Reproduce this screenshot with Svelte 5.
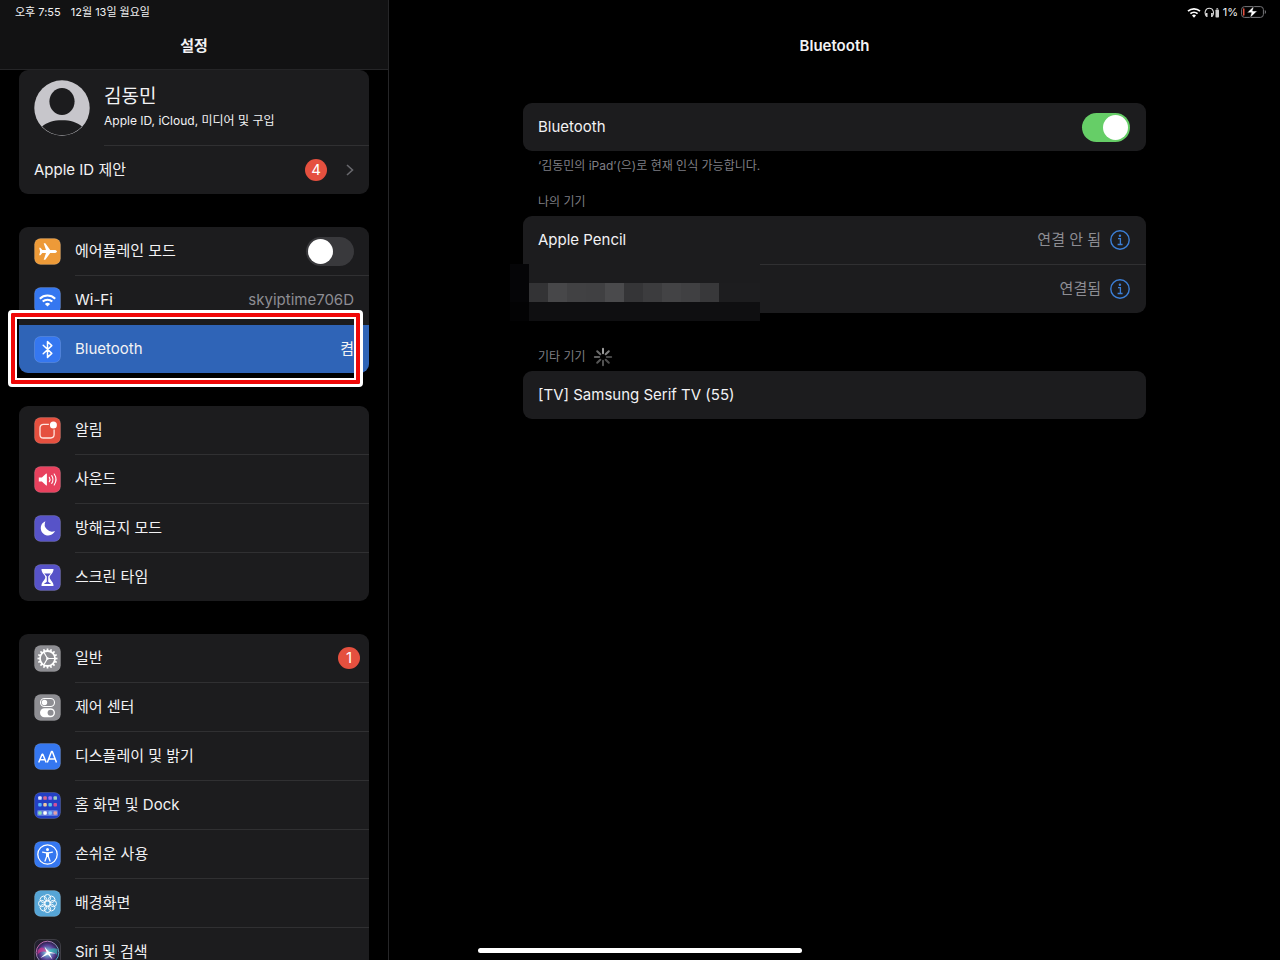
<script>
  let airplane = $state(false);
  let bluetooth = $state(true);

  const alerts = [
    { id: 'notifications', label: '알림', color: '#e5503f' },
    { id: 'sounds', label: '사운드', color: '#e8415e' },
    { id: 'dnd', label: '방해금지 모드', color: '#5753c8' },
    { id: 'screentime', label: '스크린 타임', color: '#5753c8' }
  ];
  const general = [
    { id: 'general', label: '일반', color: '#8e8e93', badge: 1 },
    { id: 'control', label: '제어 센터', color: '#8e8e93' },
    { id: 'display', label: '디스플레이 및 밝기', color: '#3577f0' },
    { id: 'home', label: '홈 화면 및 Dock', color: '#2340c4' },
    { id: 'accessibility', label: '손쉬운 사용', color: '#3577f0' },
    { id: 'wallpaper', label: '배경화면', color: '#56a5d6' },
    { id: 'siri', label: 'Siri 및 검색', color: '#22202f' }
  ];

  const teeth = Array.from({ length: 16 }, (_, i) => i * 22.5);
  const petals = Array.from({ length: 8 }, (_, i) => i * 45);
  const spokes = [0.62, 0.5, 0.28, 0.3, 0.32, 0.34, 0.38, 0.42];
  const apps = [
    ['#dfe6ff', '#d9698e', '#a070ff', '#9fd0c0'],
    ['#57b4ff', '#f0c9a0', '#58c6e8', '#d0509a'],
    ['#8fe0b0', '#ffffff', '#7cc4ff', '#e0a0a8']
  ];
  const mosaic = ['#333335', '#474749', '#414143', '#404042', '#4a4a4c', '#353537', '#3c3c3e', '#434345', '#404042', '#38383a', '#1d1d1f'];
</script>

{#snippet icon(id, color)}
  <svg class="icon" viewBox="0 0 27 27" aria-hidden="true">
    <rect x="0.5" y="0.5" width="26" height="26" rx="6" fill={color} stroke="#fff" stroke-opacity="0.14" />
    {#if id === 'airplane'}
      <path fill="#fff" d="M23 13.500c0-.9-1.300-1.500-2.700-1.500h-4.100L11.300 5.200H9.700l2.300 6.800H8.300L6.400 9.800H5.200l.9 3.700-.9 3.700h1.200l1.900-2.200H12l-2.300 6.800h1.600l4.900-6.800h4.100c1.400 0 2.700-.6 2.700-1.500z" />
    {:else if id === 'wifi'}
      <g fill="none" stroke="#fff" stroke-width="2">
        <path d="M5.800 11.700a11 11 0 0 1 15.400 0" />
        <path d="M8.700 14.600a7 7 0 0 1 9.600 0" />
      </g>
      <path fill="#fff" d="M10.900 16.900a3.800 3.800 0 0 1 5.200 0l-2.600 2.700z" />
    {:else if id === 'bluetooth'}
      <path fill="none" stroke="#fff" stroke-width="1.500" stroke-linejoin="round" stroke-linecap="round" d="M9.200 9.300l8.600 8.100-4.300 4V5.600l4.300 4-8.600 8.100" />
    {:else if id === 'notifications'}
      <path fill="none" stroke="#ffe6e0" stroke-width="1.300" d="M14.900 7.300H9.400A3.400 3.400 0 0 0 6 10.700v7A3.400 3.400 0 0 0 9.400 21h7.300a3.400 3.400 0 0 0 3.400-3.400V12.600" />
      <circle cx="19.400" cy="8" r="3.500" fill="#fff" />
    {:else if id === 'sounds'}
      <path fill="#fff" d="M4.800 11.400h3.100l4-3.700c.5-.4 1-.2 1 .4v10.800c0 .6-.5.800-1 .4l-4-3.700H4.800z" />
      <g fill="none" stroke="#fff" stroke-width="1.100" stroke-linecap="round">
        <path d="M15.300 11.300a4 4 0 0 1 0 4.400" /><path d="M17.700 9.600a7 7 0 0 1 0 7.800" /><path d="M20.200 8a10 10 0 0 1 0 11" />
      </g>
    {:else if id === 'dnd'}
      <path fill="#fff" d="M11.400 6.200a7.400 7.400 0 1 0 9.600 9.700 7.300 7.300 0 0 1-9.600-9.700z" />
    {:else if id === 'screentime'}
      <path fill="#fff" d="M8.200 5h10.600c.6 0 .9.500.7 1.100-.7 3.900-3.800 5-3.800 7.400s3.100 3.500 3.800 7.400c.2.600-.1 1.100-.7 1.100H8.200c-.6 0-.9-.5-.7-1.100.7-3.900 3.800-5 3.800-7.400S8.200 10 7.500 6.100c-.2-.6.1-1.100.7-1.100z" />
      <path fill={color} d="M10.200 9.500h6.600l-2.600 3v5.200l3 2.300H9.800l3-2.300v-5.200z" />
    {:else if id === 'general'}
      <g stroke="#fff">
        {#each teeth as a}
          <path d="M13.500 3.500v2.800" stroke-width="1.700" transform="rotate({a} 13.500 13.500)" />
        {/each}
        <circle cx="13.500" cy="13.500" r="7.500" fill="none" stroke-width="1.800" />
        <path d="M13.500 13.500h7M13.500 13.500L10 7.500M13.500 13.500L10 19.500" stroke-width="1.200" />
      </g>
      <circle cx="13.500" cy="13.500" r="1.300" fill="#fff" />
    {:else if id === 'control'}
      <rect x="6.500" y="4.500" width="14" height="8" rx="4" fill="none" stroke="#fff" stroke-width="1.100" />
      <circle cx="10.500" cy="8.500" r="2.700" fill="#fff" />
      <rect x="6" y="14.300" width="15" height="9" rx="4.500" fill="#fff" />
      <circle cx="16.600" cy="18.800" r="3" fill={color} />
    {:else if id === 'display'}
      <g fill="none" stroke="#fff" stroke-width="1.500" stroke-linejoin="round">
        <path d="M4.700 19.500l3.400-8.300h.7l3.400 8.300M5.900 16.800H11" />
        <path d="M13.300 19.500l4.200-11h.8l4.200 11M14.700 15.900h6.400" />
      </g>
    {:else if id === 'home'}
      <rect x="3" y="18" width="21" height="6" rx="1.500" fill="#8ea4f0" opacity="0.55" />
      {#each apps as row, r}
        {#each row as fill, c}
          <rect x={4.2 + c * 5.1} y={r === 2 ? 19.2 : 4.3 + r * 6.7} width="3.500" height="3.500" rx="0.900" {fill} />
        {/each}
      {/each}
    {:else if id === 'accessibility'}
      <circle cx="13.500" cy="13.500" r="9.700" fill="none" stroke="#fff" stroke-width="1.300" />
      <circle cx="13.500" cy="8.400" r="1.500" fill="#fff" />
      <path fill="none" stroke="#fff" stroke-width="1.300" stroke-linecap="round" stroke-linejoin="round" d="M8.600 11.200l3.700.7h2.400l3.700-.7M12.700 12v3.500l-1.700 4.600M14.300 12v3.500l1.700 4.600" />
      <path fill="#fff" d="M12.200 11.500h2.600v4.500h-2.600z" />
    {:else if id === 'wallpaper'}
      <g fill="none" stroke="#fff" stroke-width="0.900">
        {#each petals as a}
          <circle cx="13.500" cy="7.700" r="3.200" transform="rotate({a} 13.500 13.500)" />
        {/each}
        <circle cx="13.500" cy="13.500" r="2.600" />
      </g>
    {:else}
      <defs>
        <linearGradient id="siri-ring" x1="0" y1="0" x2="1" y2="1">
          <stop offset="0" stop-color="#d858a8" /><stop offset="0.500" stop-color="#8a90b8" /><stop offset="1" stop-color="#37c5d8" />
        </linearGradient>
        <radialGradient id="siri-core">
          <stop offset="0" stop-color="#d8f2f8" /><stop offset="0.300" stop-color="#6f9ac8" /><stop offset="0.650" stop-color="#5a3f96" /><stop offset="1" stop-color="#241d40" />
        </radialGradient>
      </defs>
      <circle cx="13.500" cy="13.500" r="11.300" fill="url(#siri-core)" stroke="url(#siri-ring)" stroke-width="1" />
      <path fill="#d9388e" opacity="0.700" d="M3.500 12C6 7 10 7 13.500 13.500 10 12 6 12 3.500 16z" />
      <path fill="#2fc3b8" opacity="0.650" d="M23.500 10C19 8 16 10 13.500 13.500c4-1 7-.5 9.500 2.500z" />
      <path fill="#fff" d="M10.500 7.500l4.200 5 7.300 2-6.500-.3 3 6.300-4.500-5-7.500 3.500 6.200-5.500z" />
    {/if}
  </svg>
{/snippet}

{#snippet navRow(item)}
  <li>
    <a class="row" href="#{item.id}">
      {@render icon(item.id, item.color)}
      <span class="body">
        <span>{item.label}</span>
        {#if item.badge}<span class="badge edge">{item.badge}</span>{/if}
      </span>
    </a>
  </li>
{/snippet}

{#snippet infoButton(name)}
  <button class="info" aria-label={name}>
    <svg viewBox="0 0 20 20" aria-hidden="true">
      <circle cx="10" cy="10" r="9.200" fill="none" stroke="#3c7fd6" stroke-width="1.400" />
      <circle cx="9.900" cy="5.700" r="1.200" fill="#3c7fd6" />
      <path d="M8 8.700h2.400v5.600M7.600 14.500h5" fill="none" stroke="#3c7fd6" stroke-width="1.300" />
    </svg>
  </button>
{/snippet}

<div class="screen">
  <aside>
    <header class="side-head">
      <div class="status"><span>오후 7:55</span><span>12월 13일 월요일</span></div>
      <h1>설정</h1>
    </header>

    <nav aria-label="설정">
      <ul class="card">
        <li>
          <a class="profile" href="#profile">
            <svg class="avatar" viewBox="0 0 57 57" aria-hidden="true">
              <circle cx="28.500" cy="28.500" r="28.200" fill="#c7c6cb" />
              <ellipse cx="28.500" cy="21.800" rx="12.800" ry="13.700" fill="#1c1c1e" />
              <path fill="#1c1c1e" d="M8.200 47.300C13 43 20 41 28.500 41s15.500 2 20.300 6.300a27.600 27.600 0 0 1-40.600 0z" />
            </svg>
            <span class="who">
              <strong>김동민</strong>
              <small>Apple ID, iCloud, 미디어 및 구입</small>
            </span>
          </a>
        </li>
        <li>
          <a class="row plain" href="#suggestions">
            <span class="body">
              <span>Apple ID 제안</span>
              <span class="trail">
                <span class="badge">4</span>
                <svg class="chevron" viewBox="0 0 8 12" aria-hidden="true"><path d="M1 1l5.500 5L1 11" fill="none" stroke="#68686d" stroke-width="1.600" /></svg>
              </span>
            </span>
          </a>
        </li>
      </ul>

      <ul class="card">
        <li>
          <label class="row">
            {@render icon('airplane', '#ed9a38')}
            <span class="body">
              <span>에어플레인 모드</span>
              <input type="checkbox" role="switch" class="switch" bind:checked={airplane} />
            </span>
          </label>
        </li>
        <li>
          <a class="row before-selected" href="#wifi">
            {@render icon('wifi', '#3577f0')}
            <span class="body"><span>Wi-Fi</span><span class="value">skyiptime706D</span></span>
          </a>
        </li>
        <li class="marked">
          <a class="row selected" href="#bluetooth" aria-current="page">
            {@render icon('bluetooth', '#3577f0')}
            <span class="body"><span>Bluetooth</span><span>켬</span></span>
          </a>
          <span class="marker"></span>
        </li>
      </ul>

      <ul class="card">
        {#each alerts as item}{@render navRow(item)}{/each}
      </ul>

      <ul class="card">
        {#each general as item}{@render navRow(item)}{/each}
      </ul>
    </nav>
  </aside>

  <main>
    <header class="main-head">
      <div class="status right">
        <svg width="14" height="11" viewBox="0 0 14 11" aria-hidden="true">
          <g fill="none" stroke="#fff" stroke-width="1.700"><path d="M1 4.200a8.700 8.700 0 0 1 12 0" /><path d="M3.400 6.700a5.300 5.300 0 0 1 7.200 0" /></g>
          <path fill="#fff" d="M5 8.500a2.900 2.900 0 0 1 4 0l-2 2.200z" />
        </svg>
        <svg width="16" height="11" viewBox="0 0 16 11" aria-hidden="true">
          <path fill="none" stroke="#ddd" stroke-width="1.100" d="M2.500 9.500C-.2 6 1.300 1.300 5.300 1.300S10.800 6 8.100 9.500" />
          <path fill="#ddd" d="M1.700 6h1.800v4H2.300zM8.900 6H7.100v4h1.200z" />
          <rect x="11.500" y="2.500" width="3.500" height="8" rx="0.800" fill="#ccc" /><rect x="12.400" y="1.200" width="1.700" height="1" fill="#ccc" />
        </svg>
        <span>1%</span>
        <svg width="26" height="12" viewBox="0 0 26 12" aria-hidden="true">
          <rect x="0.600" y="0.600" width="21.800" height="10.800" rx="3" fill="none" stroke="#77777a" stroke-width="1" />
          <path fill="#77777a" d="M23.800 4c1.600.5 1.600 3.500 0 4z" />
          <rect x="2" y="2.200" width="1.500" height="7.600" rx="0.700" fill="#e5503f" />
          <path fill="#fff" stroke="#000" stroke-width="0.500" d="M12.900 0L6 6.700h4.300L9 12l7.300-7h-4.600z" />
        </svg>
      </div>
      <h2>Bluetooth</h2>
    </header>

    <div class="content">
      <label class="card item">
        <span>Bluetooth</span>
        <input type="checkbox" role="switch" class="switch" bind:checked={bluetooth} />
      </label>
      <p class="note">‘김동민의 iPad’(으)로 현재 인식 가능합니다.</p>

      <h3>나의 기기</h3>
      <ul class="card">
        <li class="item line">
          <span>Apple Pencil</span>
          <span class="state">연결 안 됨 {@render infoButton('Apple Pencil')}</span>
        </li>
        <li class="item hidden-name">
          <span class="mosaic">
            <i class="edge-top"></i>
            <i class="above"></i>
            {#each mosaic as c}<i style:background={c}></i>{/each}
            <i class="edge-low"></i>
            <i class="below"></i>
          </span>
          <span class="state">연결됨 {@render infoButton('연결됨')}</span>
        </li>
      </ul>

      <h3 class="far">
        기타 기기
        <svg width="20" height="20" viewBox="0 0 20 20" aria-hidden="true">
          {#each spokes as o, i}
            <path d="M10 1.800v4.400" stroke="#fff" stroke-width="2" stroke-linecap="round" opacity={o} transform="rotate({i * 45} 10 10)" />
          {/each}
        </svg>
      </h3>
      <ul class="card">
        <li class="item"><span>[TV] Samsung Serif TV (55)</span></li>
      </ul>
    </div>
  </main>
  <div class="home-bar"></div>
</div>

<style>
  :global(body) { background: #000; }
  .screen {
    position: relative;
    display: flex;
    height: 100vh;
    overflow: hidden;
    background: #000;
    color: #f2f2f4;
    font: 400 15px/20px Inter, "Noto Sans CJK KR", sans-serif;
  }
  .screen * { box-sizing: border-box; }
  ul, h1, h2, h3, p { margin: 0; padding: 0; list-style: none; }
  a { color: inherit; text-decoration: none; }
  aside { flex: 0 0 389px; border-right: 1px solid #262628; }
  main { flex: 1; min-width: 0; }
  .side-head { height: 70px; background: #121213; border-bottom: 1px solid #252527; }
  .status {
    display: flex;
    align-items: center;
    gap: 10px;
    height: 24px;
    padding: 0 15px;
    font-size: 11px;
    line-height: 16px;
  }
  .status.right { justify-content: flex-end; gap: 3px; padding-right: 13px; }
  h1, h2 { padding: 12px 0; text-align: center; font-size: 15px; line-height: 20px; font-weight: 600; }
  nav { display: flex; flex-direction: column; gap: 33px; padding: 0 19px; }
  .card { background: #1c1c1e; border-radius: 9px; }
  .profile { display: flex; gap: 14px; padding-left: 15px; }
  .avatar { width: 56px; height: 56px; margin-top: 10px; }
  .who { flex: 1; display: flex; flex-direction: column; height: 76px; padding-top: 14px; border-bottom: 1px solid #303032; }
  .who strong { font-size: 19px; line-height: 26px; font-weight: 400; }
  .who small { font-size: 12px; line-height: 22px; }
  .row { display: flex; align-items: center; gap: 14px; padding-left: 15px; }
  .icon { flex: none; width: 27px; height: 27px; }
  .body {
    flex: 1;
    display: flex;
    align-items: center;
    justify-content: space-between;
    height: 49px;
    padding-right: 15px;
    border-bottom: 1px solid #303032;
  }
  .before-selected .body { border-bottom-color: transparent; }
  li:last-child .body { height: 48px; border-bottom: 0; }
  .value { color: #8d8d93; }
  .trail { display: flex; align-items: center; gap: 19px; }
  .chevron { width: 8px; height: 12px; }
  .badge {
    width: 22px;
    height: 22px;
    border-radius: 50%;
    background: #e5503f;
    text-align: center;
    line-height: 22px;
    color: #fff;
  }
  .badge.edge { margin-right: -6px; }
  .selected { background: #2f64b7; border-radius: 0 0 9px 9px; }
  .marked { position: relative; }
  .marker {
    position: absolute;
    inset: -15px 6px -14px -11px;
    border: 3px solid #fff;
    border-radius: 4px;
    box-shadow: inset 0 0 0 4px #f00808, inset 0 0 0 6px #fff;
    pointer-events: none;
  }
  .switch {
    appearance: none;
    flex: none;
    display: flex;
    align-items: center;
    width: 48px;
    height: 29px;
    margin: 0;
    padding: 0 2px;
    border-radius: 15px;
    background: #39393c;
  }
  .switch::before { content: ""; width: 25px; height: 25px; border-radius: 50%; background: #fff; }
  .switch:checked { justify-content: flex-end; background: #66ce67; }
  .content { width: 70%; max-width: 623px; margin: 35px auto 0; }
  .item { display: flex; align-items: center; justify-content: space-between; height: 48px; padding: 0 16px 0 15px; }
  .line { height: 49px; border-bottom: 1px solid #303032; }
  .note, h3 { padding-left: 15px; font-size: 12px; line-height: 16px; font-weight: 400; color: #7f7f84; }
  .note { margin: 7px 0 20px; }
  h3 { display: flex; align-items: center; gap: 7px; height: 16px; margin-bottom: 6px; }
  .far { margin-top: 36px; }
  .state { display: flex; align-items: center; gap: 9px; margin-left: auto; color: #8d8d93; }
  .info { width: 20px; height: 20px; padding: 0; border: 0; background: none; }
  .info svg { display: block; width: 20px; height: 20px; }
  .hidden-name { position: relative; }
  .mosaic {
    position: absolute;
    left: -13px;
    top: -1px;
    display: grid;
    grid-template-columns: 19px repeat(10, 19px) 41px;
    grid-template-rows: repeat(3, 19px);
  }
  .edge-top { grid-row: 1 / span 2; grid-column: 1; background: #050507; }
  .above { grid-row: 1; grid-column: 2 / -1; background: #1c1c1e; }
  .edge-low { grid-row: 3; grid-column: 1; background: #030304; }
  .below { grid-row: 3; grid-column: 2 / -1; background: #0f0f11; }
  .home-bar {
    position: absolute;
    left: 50%;
    bottom: 7px;
    width: 324px;
    height: 5px;
    margin-left: -162px;
    border-radius: 3px;
    background: #fff;
  }
</style>
